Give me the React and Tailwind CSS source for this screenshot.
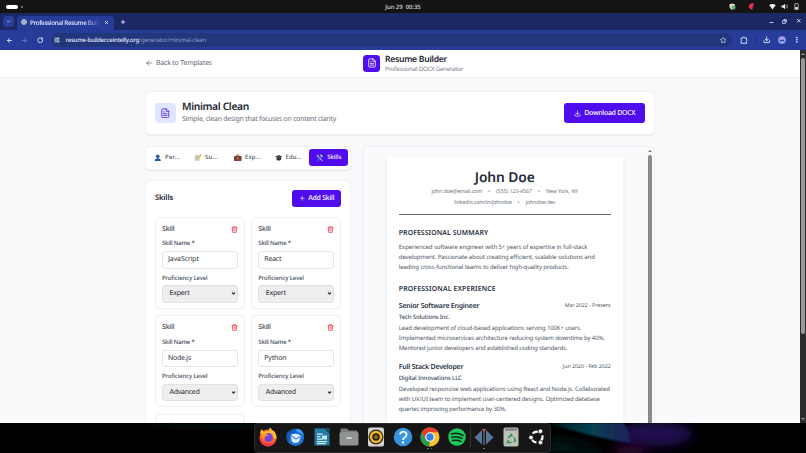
import React, { useLayoutEffect, useRef } from "react";
import { ArrowLeft, ArrowRight, RotateCw, FileText, Download, Plus, Trash2, Star, X, ChevronDown, MoreVertical, Copy, Minus, Globe, SlidersHorizontal } from "lucide-react";

/* One line of text, tracked so that it fills the given width. */
function T({ w, className = "", children }) {
  const ref = useRef(null);
  useLayoutEffect(() => {
    const el = ref.current;
    el.style.letterSpacing = "0px";
    const natural = el.getBoundingClientRect().width;
    const n = el.textContent.length;
    el.style.letterSpacing = `${(w - natural) / n}px`;
  }, [w, children]);
  return (
    <span ref={ref} className={`inline-block shrink-0 whitespace-pre ${className}`}>
      {children}
    </span>
  );
}

function TopBar() {
  return (
    <div className="relative flex h-[13px] items-center justify-center bg-[#141414]">
      <div className="absolute top-[5px] left-[6px] flex items-center gap-[3px]">
        <div className="h-[3.5px] w-3 rounded-full bg-white" />
        <div className="size-[2px] rounded-full bg-[#8a8a8a]" />
      </div>
      <T w={35.5} className="text-[6px] font-medium text-[#dcdcdc]">Jun 29  00:35</T>
      <div className="absolute top-[3px] left-[729px] flex items-center">
        <svg width="7" height="7" viewBox="0 0 14 14">
          <path d="M1 2.5 6.5 1 12 2.5V7c0 3-2.500 5-5.500 6.500C3.500 12 1 10 1 7Z" fill="#d5d9d6" />
          <circle cx="9.500" cy="9" r="3.800" fill="#3fa653" />
          <path d="m7.800 9 1.300 1.300 2.200-2.600" stroke="#fff" fill="none" />
        </svg>
        <svg className="ml-[12px]" width="7" height="7" viewBox="0 0 14 14">
          <path d="M12.500 3A6 6 0 1 0 10 12.500L8 9.500 12 7 8.500 6Z" fill="#e8304f" />
          <path d="M7 1a6 6 0 0 1 5.500 2L9 5Z" fill="#c02bb4" />
        </svg>
        <svg className="ml-[14px]" width="7" height="7" viewBox="0 0 14 14">
          <path d="M.5 4Q7-.500 13.500 4L7 13Z" fill="#f1f1f1" />
        </svg>
        <svg className="ml-[5px]" width="7" height="7" viewBox="0 0 14 14">
          <path d="M1 5h3l4-3.500v11L4 9H1Z" fill="#f1f1f1" />
          <path d="M9.500 4.500q2 2.500 0 5M11.500 3q3 4 0 8" fill="none" stroke="#bbb" strokeWidth="1.300" />
        </svg>
        <svg className="ml-[5px]" width="7" height="7" viewBox="0 0 14 14">
          <path d="M5 .8h4V2h1.500v11h-7V2H5Z" fill="none" stroke="#ddd" strokeWidth="1.300" />
          <path d="M4.500 8h5v4h-5z" fill="#eee" />
        </svg>
      </div>
    </div>
  );
}

function Browser() {
  return (
    <>
      <div className="flex h-[17px] items-end bg-[#1b2863] text-[#dfe5ff]">
        <div className="mb-[3px] ml-[3px] flex h-[11px] w-[11px] items-center justify-center rounded-[3.500px] bg-[#2a3f99]">
          <ChevronDown size={5} strokeWidth={3.500} />
        </div>
        <div className="ml-[3px] flex h-[14.500px] w-[97px] items-center rounded-t-[4px] bg-[#273c98] pb-[1.500px] pl-[3.500px]">
          <Globe size={6} strokeWidth={3} className="rounded-full bg-[#64708f] text-[#c5cce0]" />
          <div className="ml-[3.500px] flex w-[70px] overflow-hidden [mask-image:linear-gradient(to_right,black_78%,transparent_100%)]">
            <T w={77} className="text-[6.300px] leading-[9px] font-medium text-[#e8ecff]">Professional Resume Builder</T>
          </div>
          <X size={5} strokeWidth={4} className="ml-[4px]" />
        </div>
        <Plus size={6} strokeWidth={3.500} className="mb-[5px] ml-[5.500px]" />
        <div className="mr-[5px] mb-[5px] ml-auto flex items-center gap-[8.500px]">
          <Minus size={5} strokeWidth={4} className="mt-[3px]" />
          <Copy size={5} strokeWidth={4} className="-scale-x-100" />
          <X size={5.500} strokeWidth={4} />
        </div>
      </div>
      <div className="flex h-[20px] items-center bg-[#273c98] text-[#dfe5ff]">
        <ArrowLeft size={7} strokeWidth={3} className="ml-[6px]" />
        <ArrowRight size={7} strokeWidth={3} className="ml-[8px] text-[#6c7cc4]" />
        <RotateCw size={6.500} strokeWidth={3.200} className="ml-[8.500px]" />
        <div className="ml-[8px] flex h-[14px] w-[681px] items-center rounded-full bg-[#22367c] pr-[6px] pl-[3px]">
          <SlidersHorizontal size={6} strokeWidth={3} />
          <T w={73.500} className="ml-[5.500px] text-[6px] leading-[9px] font-medium text-[#e6eaff]">resume-builder.ceintelly.org</T>
          <T w={67} className="text-[6px] leading-[9px] text-[#8e9cd0]">/generator/minimal-clean</T>
          <Star size={6.500} strokeWidth={2.500} className="ml-auto" />
        </div>
        <svg className="ml-[8px]" width="8" height="8" viewBox="0 0 16 16" fill="none" stroke="currentColor" strokeWidth="1.900">
          <path d="M2 4h3.500a2 1.800 0 0 1 4 0H13v3.500a2 2 0 0 1 0 3.500v3.500H2V11a2 2 0 0 0 0-3.500Z" strokeLinejoin="round" />
        </svg>
        <div className="ml-[7px] h-[6px] w-px bg-[#1d2f78]" />
        <Download size={7.500} strokeWidth={3} className="ml-[7px]" />
        <svg className="ml-[7.500px]" width="8" height="8" viewBox="0 0 16 16">
          <circle cx="8" cy="8" r="8" fill="#8d86e8" />
          <path d="M3 6q5-6 10 0v3H3Z" fill="#cfb9f5" />
          <path d="M4 7h8v3H4z" fill="#3d3a9c" />
          <path d="M3 12q5-2 10 0-5 5-10 0" fill="#64c5f0" />
        </svg>
        <MoreVertical size={7.500} strokeWidth={3} className="ml-[7px]" />
      </div>
    </>
  );
}

function Header() {
  return (
    <header className="flex h-[27.500px] items-center border-b border-[#eceef1] bg-white pl-[145px]">
      <ArrowLeft size={8} strokeWidth={2} className="text-[#4b5563]" />
      <T w={56} className="ml-[3px] pt-px text-[6.900px] leading-[10px] text-[#5d6674]">Back to Templates</T>
      <div className="ml-[151px] flex size-[17px] items-center justify-center rounded-[3.500px] bg-[#4f0cec] text-white">
        <FileText size={10} strokeWidth={1.900} />
      </div>
      <div className="ml-[5px] flex flex-col items-start">
        <T w={62} className="text-[8.600px] leading-[11px] font-semibold text-[#1d2534]">Resume Builder</T>
        <T w={78} className="text-[6.100px] leading-[8px] text-[#7b8290]">Professional DOCX Generator</T>
      </div>
    </header>
  );
}

function TitleCard() {
  return (
    <section className="flex h-[44px] items-center rounded-[4px] border border-[#f0f1f4] bg-white px-[9px] shadow-[0_0.500px_1px_rgba(0,0,0,0.060)]">
      <div className="flex size-[20.500px] items-center justify-center rounded-[3.500px] bg-[#dfe6ff] text-[#5b2bea]">
        <FileText size={10.500} strokeWidth={2} />
      </div>
      <div className="ml-[6.500px] flex flex-col items-start pt-[0.500px]">
        <T w={67} className="text-[10.300px] leading-[13px] font-semibold text-[#1d2534]">Minimal Clean</T>
        <T w={154} className="text-[6.900px] leading-[11px] text-[#656d7a]">Simple, clean design that focuses on content clarity</T>
      </div>
      <div className="ml-auto flex h-[20px] w-[81px] items-center justify-center rounded-[3px] bg-[#4f0cec] text-white">
        <Download size={7} strokeWidth={2.200} />
        <T w={51} className="ml-[3.500px] pt-px text-[7px] leading-[10px] font-medium">Download DOCX</T>
      </div>
    </section>
  );
}

const tabIcons = {
  person: (
    <>
      <circle cx="8" cy="5" r="4" fill="#27649f" />
      <path d="M1.500 15q0-6 6.500-6t6.500 6Z" fill="#1f5b99" />
    </>
  ),
  memo: (
    <>
      <path d="M1 2h12v13H1z" fill="#d9dde1" />
      <path d="M3 5h7M3 8h6M3 11h5" stroke="#8793a0" />
      <path d="m6.500 12 1-3L13 1l2.500 1.800L9.500 11Z" fill="#f4b63c" />
      <path d="m13 1 1-1 2 1.600-.700 1.200Z" fill="#df5b5b" />
    </>
  ),
  briefcase: (
    <>
      <path d="M5.500 4V2h5v2" fill="none" stroke="#4e342e" strokeWidth="1.500" />
      <rect x="0" y="4" width="16" height="11" rx="1.500" fill="#7d4636" />
      <path d="M0 9h16" stroke="#4e2b22" />
      <path d="M6.500 8h3v2.500h-3z" fill="#e8b74c" />
    </>
  ),
  cap: (
    <>
      <path d="M3 7v5q5 4 10 0V7Z" fill="#34393d" />
      <path d="m0 5 9-3 7 4-8 4Z" fill="#454b50" />
      <path d="M3 6v7" stroke="#e3a72f" strokeWidth="1.600" />
    </>
  ),
  tools: (
    <>
      <path d="M3 4 13.500 14.500" stroke="#b1c1cb" strokeWidth="2.400" />
      <path d="M12.500 4 3 14" stroke="#3d8fae" strokeWidth="2.600" />
      <path d="m8 1.500 4-.500 3.500 4-2 2L8.500 3Z" fill="#aab9c1" />
      <path d="M1 3 3 1l2.500 2.500-2 2Z" fill="#b1c1cb" />
    </>
  ),
};

const tabs = [
  { icon: "person", label: "Per...", w: 15, box: "w-[40px]" },
  { icon: "memo", label: "Su...", w: 13, box: "w-[40px]" },
  { icon: "briefcase", label: "Exp...", w: 16, box: "w-[40.500px]" },
  { icon: "cap", label: "Edu...", w: 16, box: "w-[34.500px]" },
];

function TabIcon({ name }) {
  return (
    <svg width="7.500" height="7.500" viewBox="0 0 16 16" className="shrink-0">
      {tabIcons[name]}
    </svg>
  );
}

function Tabs() {
  return (
    <nav className="flex h-[24px] items-center rounded-[4px] border border-[#f0f1f4] bg-white pl-[8px] shadow-[0_0.500px_1px_rgba(0,0,0,0.060)]">
      {tabs.map((t) => (
        <div key={t.icon} className={`flex shrink-0 items-center ${t.box}`}>
          <TabIcon name={t.icon} />
          <T w={t.w} className="ml-[3.500px] text-[6px] leading-[9px] font-medium text-[#4b5563]">{t.label}</T>
        </div>
      ))}
      <div className="flex h-[17px] w-[39px] items-center justify-center rounded-[3px] bg-[#4f0cec]">
        <TabIcon name="tools" />
        <T w={14} className="ml-[4px] text-[6px] leading-[9px] font-medium text-white">Skills</T>
      </div>
    </nav>
  );
}

function SkillCard({ name, nameW, level, levelW }) {
  return (
    <div className="flex h-[92px] w-[90px] flex-col rounded-[4px] border border-[#eff0f3] px-[6px] pt-[6.500px]">
      <div className="flex h-[10px] items-center justify-between">
        <T w={12.500} className="pt-px text-[6.900px] leading-[10px] font-medium text-[#384150]">Skill</T>
        <Trash2 size={7} strokeWidth={2.400} className="text-[#e23444]" />
      </div>
      <div className="mt-[5px] flex h-[8px] items-center">
        <T w={32.500} className="text-[6px] leading-[8px] font-medium text-[#434c5a]">Skill Name *</T>
      </div>
      <div className="mt-[4px] flex h-[17.500px] items-center rounded-[3px] border border-[#e3e5ea] bg-white pl-[5px]">
        <T w={nameW} className="pt-px text-[7px] leading-[10px] text-[#30343b]">{name}</T>
      </div>
      <div className="mt-[5px] flex h-[8px] items-center">
        <T w={45.500} className="text-[6px] leading-[8px] font-medium text-[#434c5a]">Proficiency Level</T>
      </div>
      <div className="mt-[3.500px] flex h-[17.500px] items-center justify-between rounded-[3px] border border-[#e0e2e6] bg-[#efefef] pr-px pl-[6.500px]">
        <T w={levelW} className="pt-px text-[7px] leading-[10px] text-[#22262d]">{level}</T>
        <ChevronDown size={5} strokeWidth={5} className="text-[#1c1c1c]" />
      </div>
    </div>
  );
}

function SkillsPanel() {
  return (
    <section className="mt-[10px] h-[300px] rounded-[4px] border border-[#f0f1f4] bg-white px-[9px] pt-[9px] shadow-[0_0.500px_1px_rgba(0,0,0,0.060)]">
      <div className="flex h-[17px] items-center justify-between">
        <T w={18} className="pt-px text-[7.600px] leading-[11px] font-semibold text-[#1d2534]">Skills</T>
        <div className="flex h-[17px] w-[49px] items-center justify-center rounded-[3px] bg-[#4f0cec] text-white">
          <Plus size={6.500} strokeWidth={2.200} />
          <T w={26} className="ml-[3px] pt-px text-[7px] leading-[10px] font-medium">Add Skill</T>
        </div>
      </div>
      <div className="mt-[10px] grid grid-cols-[90px_90px] gap-x-[6.300px] gap-y-[6.800px]">
        <SkillCard name="JavaScript" nameW={31} level="Expert" levelW={20} />
        <SkillCard name="React" nameW={17} level="Expert" levelW={20} />
        <SkillCard name="Node.js" nameW={23} level="Advanced" levelW={30} />
        <SkillCard name="Python" nameW={22} level="Advanced" levelW={30} />
        <SkillCard name="TypeScript" nameW={31} level="Advanced" levelW={30} />
      </div>
    </section>
  );
}

function Heading({ w, className = "", children }) {
  return (
    <div className={`flex h-[9px] items-center ${className}`}>
      <T w={w} className="text-[6.900px] leading-[9px] font-semibold text-[#2a3342]">{children}</T>
    </div>
  );
}

function Para({ lines }) {
  return lines.map(([text, w]) => (
    <div key={text} className="flex h-[9.900px] items-center">
      <T w={w} className="text-[6.050px] leading-[9px] text-[#505968]">{text}</T>
    </div>
  ));
}

function Contact({ items, className }) {
  return (
    <div className={`flex h-[10px] items-center justify-center text-[5.300px] leading-[8px] text-[#6a7280] ${className}`}>
      {items.map(([text, w], i) => (
        <React.Fragment key={text}>
          {i > 0 && <span className="w-[14px] text-center">•</span>}
          <T w={w}>{text}</T>
        </React.Fragment>
      ))}
    </div>
  );
}

function Job({ title, titleW, date, dateW, company, companyW, lines, className }) {
  return (
    <div className={className}>
      <div className="flex h-[10px] justify-between">
        <T w={titleW} className="text-[7px] leading-[10px] font-semibold text-[#2a3342]">{title}</T>
        <T w={dateW} className="text-[5.300px] leading-[6px] text-[#505968]">{date}</T>
      </div>
      <div className="mb-[3px] flex h-[9px] items-center">
        <T w={companyW} className="text-[6.100px] leading-[9px] font-medium text-[#434c5a]">{company}</T>
      </div>
      <Para lines={lines} />
    </div>
  );
}

function Preview() {
  return (
    <section className="flex h-[300px] w-[293.500px] justify-end rounded-[4px] border border-[#eceef1] bg-[#f9fafb] pr-px">
      <article className="mt-[10px] mr-[24px] h-[290px] w-[236.500px] bg-white px-[12.300px] pt-[12.500px] shadow-[0_2px_6px_rgba(0,0,0,0.070)]">
        <div className="flex h-[16px] items-center justify-center">
          <T w={60} className="pt-px text-[13.800px] leading-[16px] font-semibold text-[#1f2937]">John Doe</T>
        </div>
        <Contact className="mt-[1px]" items={[["john.doe@email.com", 50.500], ["(555) 123-4567", 36], ["New York, NY", 32]]} />
        <Contact className="mt-[0.500px]" items={[["linkedin.com/in/johndoe", 57.500], ["johndoe.dev", 30]]} />
        <div className="mt-[7.500px] h-[1.300px] bg-[#606773]" />
        <Heading w={89.500} className="mt-[13.800px] mb-[4.700px]">PROFESSIONAL SUMMARY</Heading>
        <Para
          lines={[
            ["Experienced software engineer with 5+ years of expertise in full-stack", 188.500],
            ["development. Passionate about creating efficient, scalable solutions and", 196],
            ["leading cross-functional teams to deliver high-quality products.", 170],
          ]}
        />
        <Heading w={97} className="mt-[12.800px] mb-[7.500px]">PROFESSIONAL EXPERIENCE</Heading>
        <Job
          title="Senior Software Engineer" titleW={80.500}
          date="Mar 2022 - Present" dateW={46}
          company="Tech Solutions Inc." companyW={51}
          lines={[
            ["Lead development of cloud-based applications serving 100K+ users.", 182.500],
            ["Implemented microservices architecture reducing system downtime by 40%.", 206],
            ["Mentored junior developers and established coding standards.", 168.500],
          ]}
        />
        <Job
          className="mt-[9.500px]"
          title="Full Stack Developer" titleW={64.500}
          date="Jun 2020 - Feb 2022" dateW={48}
          company="Digital Innovations LLC" companyW={63}
          lines={[
            ["Developed responsive web applications using React and Node.js. Collaborated", 211],
            ["with UX/UI team to implement user-centered designs. Optimized database", 201],
            ["queries improving performance by 30%.", 107.500],
          ]}
        />
      </article>
      <div className="flex h-full w-[6px] flex-col items-center pt-[3px]">
        <div className="size-0 border-x-[2px] border-b-[2.200px] border-x-transparent border-b-[#777]" />
        <div className="mt-[3px] w-[4px] grow rounded-t-full bg-[#8a8a8a]" />
      </div>
    </section>
  );
}

function DockIcon({ children, className = "" }) {
  return (
    <svg viewBox="0 0 40 40" className={`size-[20px] shrink-0 ${className}`}>
      {children}
    </svg>
  );
}

function Dock() {
  return (
    <div className="relative flex h-[30px] justify-center overflow-hidden bg-black">
      <svg className="absolute inset-0" width="806" height="30" viewBox="0 0 806 30">
        <defs>
          <filter id="soft" x="-30%" y="-60%" width="160%" height="220%"><feGaussianBlur stdDeviation="6" /></filter>
          <filter id="edge" x="-10%" y="-20%" width="120%" height="140%"><feGaussianBlur stdDeviation="1" /></filter>
          <linearGradient id="teal"><stop offset="0" stopColor="#031f27" /><stop offset=".5" stopColor="#064350" /><stop offset="1" stopColor="#20205c" /></linearGradient>
        </defs>
        <path d="M120 0h140v4H200Z" fill="#0b2523" filter="url(#soft)" />
        <ellipse cx="655" cy="11" rx="38" ry="12" fill="#220d52" filter="url(#soft)" />
        <ellipse cx="630" cy="28" rx="18" ry="5" fill="#380a3c" filter="url(#soft)" />
        <path d="M552 0h72q8 12 6 20Q590 14 552 1Z" fill="url(#teal)" filter="url(#edge)" />
        <path d="M548 14q40 4 60 18h-60Z" fill="#041619" filter="url(#soft)" />
      </svg>
      <div className="relative ml-[-2px] flex h-[30px] w-[297px] items-center rounded-[4px] border border-[#2a2a2a] bg-[#161616] pb-[2px] pl-[3px]">
        <DockIcon>
          <circle cx="20" cy="22" r="17" fill="#ff6a2b" />
          <path d="M4 13Q5 6 8 4q1 5 5 6 5-4 11-2Q21 3 24 1q4 6 9 8 5 7 4 15Z" fill="#ffbd2e" />
          <path d="M3 20q2 17 17 19 14-1 17-17Q33 33 22 33 9 33 3 20Z" fill="#f0334f" />
          <circle cx="21" cy="21" r="9" fill="#7a45d4" />
          <path d="M7 15q8-5 14 2-9-1-8 8-6-3-6-10" fill="#ff9826" />
        </DockIcon>
        <DockIcon className="ml-[7px]">
          <circle cx="21" cy="21" r="17" fill="#1f74dc" />
          <path d="M3 22Q1 9 11 7 20-1 35 7q-9-1-12 4Q8 11 8 33 3 29 3 22" fill="#1558b8" />
          <path d="M11 16q11-6 21 2l-4 11q-8 6-14 0Z" fill="#dcebfb" />
          <path d="m12 17 10 7 10-6" fill="none" stroke="#4b94e3" strokeWidth="2.500" />
          <path d="M23 4q14 0 15 15-5-9-15-10Z" fill="#31a8f3" />
        </DockIcon>
        <DockIcon className="ml-[7px]">
          <path d="M5 3h20l10 10v24H5Z" fill="#217ea8" />
          <path d="M25 2h10v10Z" fill="#16536e" />
          <path d="M10 14h11M10 19h7M10 24h11M10 29h20M10 33h17" stroke="#d9f0fa" strokeWidth="2.500" />
          <path d="M20 17h10v8H20z" fill="#c4e7f5" />
        </DockIcon>
        <DockIcon className="ml-[7px]">
          <path d="M3 5q0-2 2-2h11l4 4h15q2 0 2 3v8H3Z" fill="#777c7c" />
          <rect x="1" y="10" width="38" height="27" rx="3" fill="#8f9492" />
          <path d="M15 22h10" stroke="#e3e6e5" strokeWidth="3" />
        </DockIcon>
        <DockIcon className="ml-[7px]">
          <rect x="4" y="1" width="32" height="38" rx="4" fill="#d9d4cd" />
          <circle cx="20" cy="20" r="15" fill="#292724" />
          <circle cx="20" cy="20" r="10" fill="none" stroke="#f1b728" strokeWidth="5" />
          <circle cx="20" cy="20" r="4" fill="#806824" />
        </DockIcon>
        <DockIcon className="ml-[7px]">
          <circle cx="20" cy="20" r="18.500" fill="#3794dc" />
          <path d="M14 15q1-6 7-6 6 1 6 6 0 4-4 6-3 2-3 5" fill="none" stroke="#fff" strokeWidth="3.500" />
          <circle cx="20" cy="31" r="2.300" fill="#fff" />
        </DockIcon>
        <div className="relative ml-[7px] flex">
          <DockIcon>
            <circle cx="20" cy="20" r="19" fill="#f5c22d" />
            <path d="M3.500 10.500A19 19 0 0 1 36.500 10.500H20L12 25Z" fill="#e33b2e" />
            <path d="M3.500 10.500 12 25l8 4.500L18 39A19 19 0 0 1 3.500 10.500" fill="#2a9d4b" />
            <circle cx="20" cy="20" r="9.500" fill="#fff" />
            <circle cx="20" cy="20" r="7.300" fill="#397fe8" />
          </DockIcon>
          <div className="absolute bottom-[-2px] left-[7.500px] flex gap-[2px]">
            <div className="size-[1.500px] rounded-full bg-[#3ea68c]" />
            <div className="size-[1.500px] rounded-full bg-[#3ea68c]" />
          </div>
        </div>
        <DockIcon className="ml-[7px]">
          <circle cx="20" cy="20" r="17.500" fill="#1fc75a" />
          <path d="M9 14q12-4 23 3M10 20.500q10-3 20 2.500M11 27q9-2 17 2" fill="none" stroke="#10251a" strokeWidth="3" strokeLinecap="round" />
        </DockIcon>
        <div className="ml-[3.500px] h-[21px] w-px bg-[#353535]" />
        <div className="relative ml-[3px] flex">
          <DockIcon>
            <path d="M16 6v29L1 21Z" fill="#55759f" />
            <path d="M24 6v29l15-14Z" fill="#55759f" />
            <path d="M20 6v30" stroke="#a9b4c4" strokeWidth="1.500" />
            <path d="M16 4h8l-4 6Z" fill="#e14f60" />
          </DockIcon>
          <div className="absolute bottom-[-2px] left-[9px] size-[1.500px] rounded-full bg-[#3ea68c]" />
        </div>
        <DockIcon className="ml-[7px]">
          <rect x="5" y="1" width="30" height="38" rx="4" fill="#bcc1bc" />
          <path d="M8 3h24v4H8z" fill="#777d78" />
          <path d="m15 22 5-7 3 4M26 21l3 6-4 3M21 31h-8l2-5" fill="none" stroke="#35944b" strokeWidth="3" />
        </DockIcon>
        <DockIcon className="ml-[6px]">
          <circle cx="20" cy="20" r="11" fill="none" stroke="#f2f2f2" strokeWidth="4.500" strokeDasharray="17 6" strokeDashoffset="5" />
          <circle cx="8" cy="21" r="4.500" fill="#fff" stroke="#161616" strokeWidth="1.500" />
          <circle cx="27" cy="8.500" r="4.500" fill="#fff" stroke="#161616" strokeWidth="1.500" />
          <circle cx="27" cy="31" r="4.500" fill="#fff" stroke="#161616" strokeWidth="1.500" />
        </DockIcon>
      </div>
    </div>
  );
}

export default function App() {
  return (
    <div className="flex h-[453px] w-[806px] flex-col overflow-hidden [font-family:'Noto_Sans','Open_Sans',sans-serif] leading-none [text-rendering:geometricPrecision]">
      <TopBar />
      <Browser />
      <div className="flex h-[373px] overflow-hidden">
        <div className="w-[800px] bg-[#f9fafb]">
          <Header />
          <main className="w-[655px] pt-[13.500px] pl-[145px]">
            <TitleCard />
            <div className="mt-[10.500px] flex justify-between">
              <div className="w-[206px]">
                <Tabs />
                <SkillsPanel />
              </div>
              <Preview />
            </div>
          </main>
        </div>
        <div className="flex w-[6px] flex-col items-center bg-[#2c2c2c] py-[3px]">
          <div className="size-0 border-x-[2px] border-b-[2px] border-x-transparent border-b-[#999]" />
          <div className="mt-[2.500px] h-[276px] w-[4px] rounded-full bg-[#9a9a98]" />
          <div className="mt-auto size-0 border-x-[2px] border-t-[2px] border-x-transparent border-t-[#999]" />
        </div>
      </div>
      <Dock />
    </div>
  );
}
